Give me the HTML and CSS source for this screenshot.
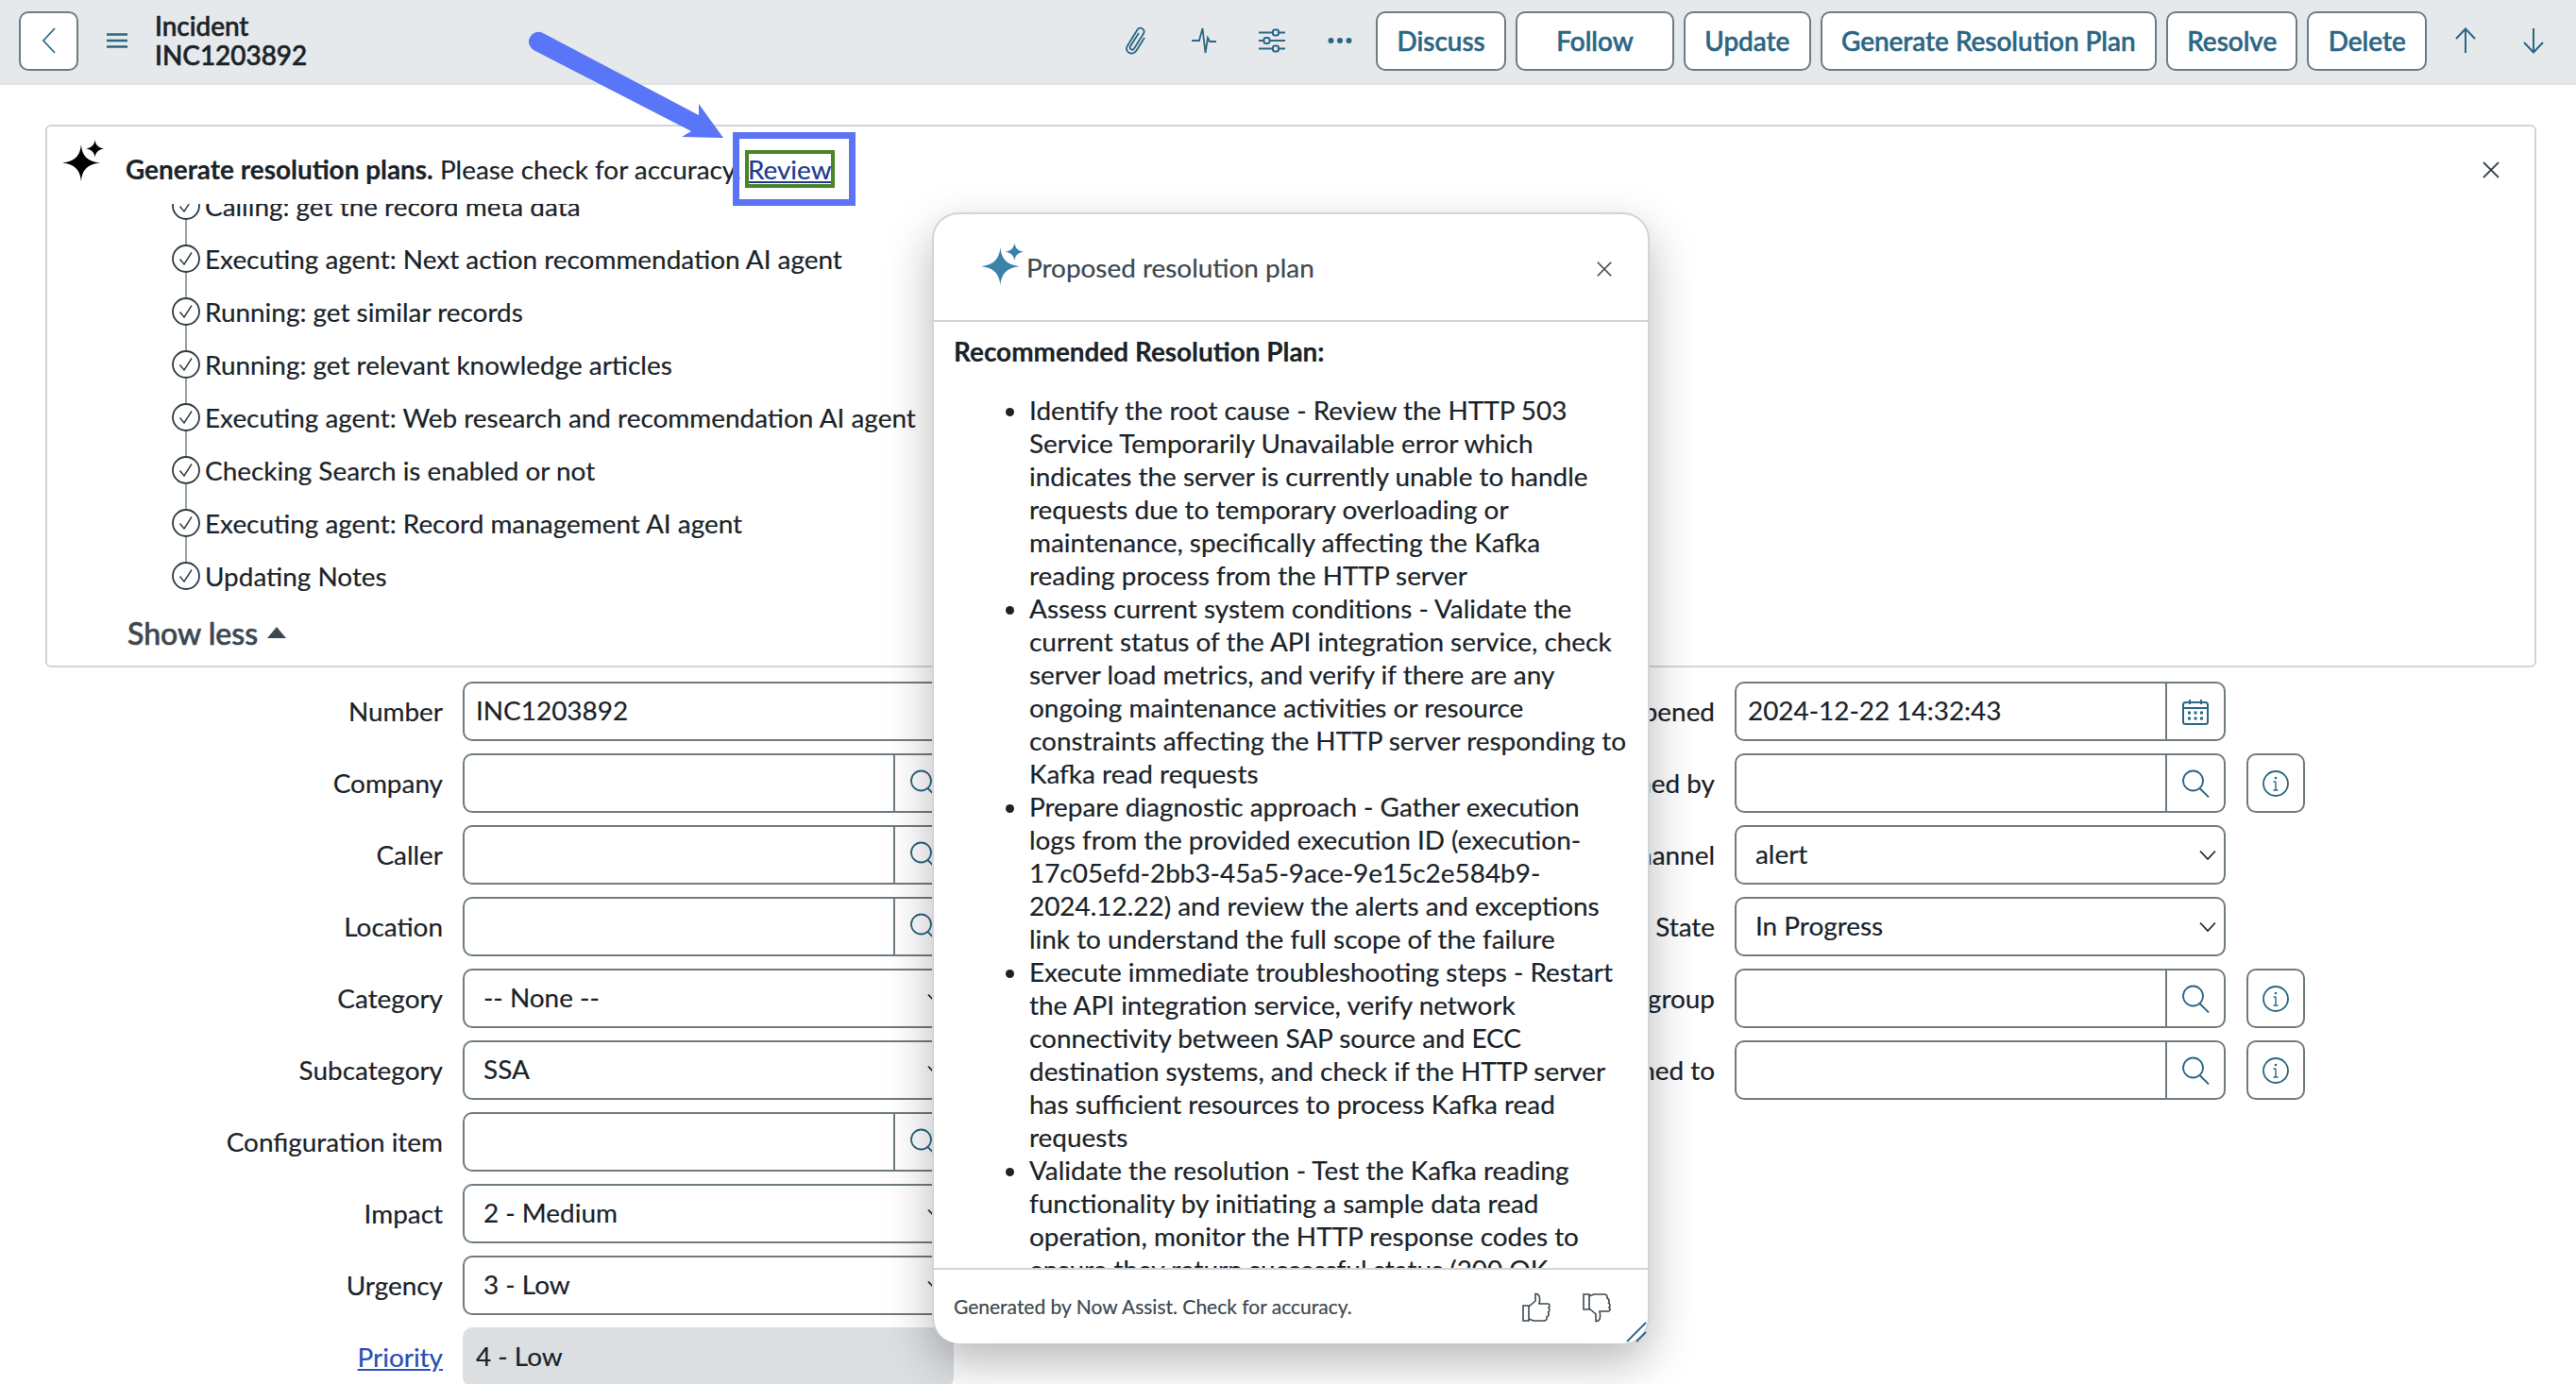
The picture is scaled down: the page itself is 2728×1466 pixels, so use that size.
FILE: index.html
```html
<!DOCTYPE html>
<html lang="en">
<head>
    <meta charset="UTF-8">
    <title>Incident INC1203892</title>
    <link rel="stylesheet" href="styles.css">
</head>
<body>
    <svg class="icon-defs" width="0" height="0">
        <symbol id="i-star" viewBox="0 0 42 42">
            <path d="M19 5 C20 16 25 22 38 23.500 C25 25 20 31 19 42 C18 31 13 25 0 23.500 C13 22 18 16 19 5 Z"/>
            <path d="M33 0 C33.500 5 36 8 42 9 C36 10 33.500 13 33 18 C32.500 13 30 10 24 9 C30 8 32.500 5 33 0 Z"/>
        </symbol>
        <symbol id="i-check" viewBox="0 0 30 30">
            <circle cx="15" cy="15" r="14" fill="none" stroke="#2f3a41" stroke-width="1.800"/>
            <path d="M8.500 15.500 L13 21 L21 8.500" fill="none" stroke="#2f3a41" stroke-width="1.400"/>
        </symbol>
        <symbol id="i-search" viewBox="0 0 30 30">
            <circle cx="12.500" cy="12" r="10.500" fill="none" stroke="currentColor" stroke-width="1.800"/>
            <path d="M19.500 20 L29 29.500" fill="none" stroke="currentColor" stroke-width="1.800"/>
        </symbol>
        <symbol id="i-info" viewBox="0 0 28 28">
            <circle cx="14" cy="14" r="13" fill="none" stroke="currentColor" stroke-width="1.800"/>
            <path d="M14 12 V21 M11.500 12 H14 M11.500 21 H16.500" fill="none" stroke="currentColor" stroke-width="1.400"/>
            <circle cx="14" cy="8" r="1.300" fill="currentColor"/>
        </symbol>
        <symbol id="i-chevron" viewBox="0 0 18 12">
            <path d="M1 1.500 L9 10 L17 1.500" fill="none" stroke="#1f2a30" stroke-width="1.800"/>
        </symbol>
        <symbol id="i-close" viewBox="0 0 20 20">
            <path d="M2 2 L18 18 M18 2 L2 18" fill="none" stroke="currentColor" stroke-width="1.800"/>
        </symbol>
    </svg>

    <header class="topbar">
        <button class="back-btn">
            <svg width="16" height="30" viewBox="0 0 16 30"><path d="M14 2 L2 15 L14 28" fill="none" stroke="#2b6684" stroke-width="1.700"/></svg>
        </button>
        <span class="menu-icon">
            <svg width="24" height="16" viewBox="0 0 24 16"><path d="M1 1.500 H23 M1 8 H23 M1 14.500 H23" stroke="#2b6684" stroke-width="2.400"/></svg>
        </span>
        <div class="record-title">Incident<br>INC1203892</div>
        <div class="actions">
            <span class="icon-btn">
                <svg width="28" height="30" viewBox="0 0 28 30"><path d="M17 7 L8 21 C6.500 24 10.500 26 12 23.500 L22 7.500 C24.500 3 18 -0.500 15.500 3.500 L5 20.500 C1 27 10.500 32 14.500 25.500 L23 12" fill="none" stroke="#2b6684" stroke-width="1.800"/></svg>
            </span>
            <span class="icon-btn">
                <svg width="28" height="30" viewBox="0 0 28 30"><path d="M1 15 H9 L12.500 2 L15.500 28 L18 12 L20 16 H27" fill="none" stroke="#2b6684" stroke-width="1.800"/></svg>
            </span>
            <span class="icon-btn">
                <svg width="30" height="26" viewBox="0 0 30 26"><path d="M1 4.500 H16 M23 4.500 H29 M1 13 H6 M13 13 H29 M1 21.500 H16 M23 21.500 H29" stroke="#2b6684" stroke-width="2"/><rect x="16" y="1.500" width="6" height="6" rx="2" fill="none" stroke="#2b6684" stroke-width="2"/><rect x="6.500" y="10" width="6" height="6" rx="2" fill="none" stroke="#2b6684" stroke-width="2"/><rect x="16" y="18.500" width="6" height="6" rx="2" fill="none" stroke="#2b6684" stroke-width="2"/></svg>
            </span>
            <span class="icon-btn">
                <svg width="26" height="6" viewBox="0 0 26 6"><circle cx="3.500" cy="3" r="3" fill="#2b6684"/><circle cx="13" cy="3" r="3" fill="#2b6684"/><circle cx="22.500" cy="3" r="3" fill="#2b6684"/></svg>
            </span>
            <button class="btn btn-first">Discuss</button>
            <button class="btn btn-wide">Follow</button>
            <button class="btn">Update</button>
            <button class="btn">Generate Resolution Plan</button>
            <button class="btn">Resolve</button>
            <button class="btn">Delete</button>
            <span class="icon-btn">
                <svg width="24" height="28" viewBox="0 0 24 28"><path d="M12 27 V2 M2 12 L12 1.500 L22 12" fill="none" stroke="#2b6684" stroke-width="2"/></svg>
            </span>
            <span class="icon-btn">
                <svg width="24" height="28" viewBox="0 0 24 28"><path d="M12 1 V26 M2 16 L12 26.500 L22 16" fill="none" stroke="#2b6684" stroke-width="2"/></svg>
            </span>
        </div>
    </header>

    <section class="banner">
        <div class="banner-head">
            <svg class="banner-star" width="44" height="44"><use href="#i-star"/></svg>
            <p class="banner-text"><b>Generate resolution plans.</b> Please check for accuracy. <a href="#" class="review-link">Review</a></p>
            <svg class="banner-close" width="20" height="20"><use href="#i-close"/></svg>
        </div>
        <ul class="steps">
            <li class="step"><svg width="30" height="30"><use href="#i-check"/></svg>Calling: get the record meta data</li>
            <li class="step"><svg width="30" height="30"><use href="#i-check"/></svg>Executing agent: Next action recommendation AI agent</li>
            <li class="step"><svg width="30" height="30"><use href="#i-check"/></svg>Running: get similar records</li>
            <li class="step"><svg width="30" height="30"><use href="#i-check"/></svg>Running: get relevant knowledge articles</li>
            <li class="step"><svg width="30" height="30"><use href="#i-check"/></svg>Executing agent: Web research and recommendation AI agent</li>
            <li class="step"><svg width="30" height="30"><use href="#i-check"/></svg>Checking Search is enabled or not</li>
            <li class="step"><svg width="30" height="30"><use href="#i-check"/></svg>Executing agent: Record management AI agent</li>
            <li class="step"><svg width="30" height="30"><use href="#i-check"/></svg>Updating Notes</li>
        </ul>
        <div class="show-less">Show less <span class="caret-up"></span></div>
    </section>

    <main class="form">
        <div class="form-col form-left">
            <div class="row"><label>Number</label><div class="field"><span class="value">INC1203892</span></div></div>
            <div class="row"><label>Company</label><div class="field"><span class="value"></span><span class="addon"><svg width="30" height="30"><use href="#i-search"/></svg></span></div></div>
            <div class="row"><label>Caller</label><div class="field"><span class="value"></span><span class="addon"><svg width="30" height="30"><use href="#i-search"/></svg></span></div></div>
            <div class="row"><label>Location</label><div class="field"><span class="value"></span><span class="addon"><svg width="30" height="30"><use href="#i-search"/></svg></span></div></div>
            <div class="row"><label>Category</label><div class="field select"><span class="value">-- None --</span><svg width="18" height="12"><use href="#i-chevron"/></svg></div></div>
            <div class="row"><label>Subcategory</label><div class="field select"><span class="value">SSA</span><svg width="18" height="12"><use href="#i-chevron"/></svg></div></div>
            <div class="row"><label>Configuration item</label><div class="field"><span class="value"></span><span class="addon"><svg width="30" height="30"><use href="#i-search"/></svg></span></div></div>
            <div class="row"><label>Impact</label><div class="field select"><span class="value">2 - Medium</span><svg width="18" height="12"><use href="#i-chevron"/></svg></div></div>
            <div class="row"><label>Urgency</label><div class="field select"><span class="value">3 - Low</span><svg width="18" height="12"><use href="#i-chevron"/></svg></div></div>
            <div class="row"><label><a href="#" class="priority-link">Priority</a></label><div class="field readonly"><span class="value">4 - Low</span></div></div>
        </div>
        <div class="form-col form-right">
            <div class="row"><label>Opened</label><div class="field"><span class="value">2024-12-22 14:32:43</span><span class="addon">
                <svg width="28" height="28" viewBox="0 0 28 28"><rect x="1" y="4" width="26" height="23" rx="2.500" fill="none" stroke="#2b6684" stroke-width="2"/><path d="M1 10 H27 M8 1 V6 M20 1 V6" stroke="#2b6684" stroke-width="2"/><path d="M6 15 H9 M12.500 15 H15.500 M19 15 H22 M6 21 H9 M12.500 21 H15.500 M19 21 H22" stroke="#2b6684" stroke-width="3"/></svg>
            </span></div></div>
            <div class="row"><label>Opened by</label><div class="field"><span class="value"></span><span class="addon"><svg width="30" height="30"><use href="#i-search"/></svg></span></div><span class="info-btn"><svg width="28" height="28"><use href="#i-info"/></svg></span></div>
            <div class="row"><label>Channel</label><div class="field select"><span class="value">alert</span><svg width="18" height="12"><use href="#i-chevron"/></svg></div></div>
            <div class="row"><label>State</label><div class="field select"><span class="value">In Progress</span><svg width="18" height="12"><use href="#i-chevron"/></svg></div></div>
            <div class="row"><label>Assignment group</label><div class="field"><span class="value"></span><span class="addon"><svg width="30" height="30"><use href="#i-search"/></svg></span></div><span class="info-btn"><svg width="28" height="28"><use href="#i-info"/></svg></span></div>
            <div class="row"><label>Assigned to</label><div class="field"><span class="value"></span><span class="addon"><svg width="30" height="30"><use href="#i-search"/></svg></span></div><span class="info-btn"><svg width="28" height="28"><use href="#i-info"/></svg></span></div>
        </div>
    </main>

    <aside class="plan-modal">
        <div class="plan-head">
            <svg class="plan-star" width="45" height="45"><use href="#i-star"/></svg>
            <span class="plan-title">Proposed resolution plan</span>
            <svg class="plan-close" width="18" height="18"><use href="#i-close"/></svg>
        </div>
        <div class="plan-body">
            <p class="plan-heading">Recommended Resolution Plan:</p>
            <ul class="plan-list">
                <li>Identify the root cause - Review the HTTP 503 Service Temporarily Unavailable error which indicates the server is currently unable to handle requests due to temporary overloading or maintenance, specifically affecting the Kafka reading process from the HTTP server</li>
                <li>Assess current system conditions - Validate the current status of the API integration service, check server load metrics, and verify if there are any ongoing maintenance activities or resource constraints affecting the HTTP server responding to Kafka read requests</li>
                <li>Prepare diagnostic approach - Gather execution logs from the provided execution ID (execution-17c05efd-2bb3-45a5-9ace-9e15c2e584b9-2024.12.22) and review the alerts and exceptions link to understand the full scope of the failure</li>
                <li>Execute immediate troubleshooting steps - Restart the API integration service, verify network connectivity between SAP source and ECC destination systems, and check if the HTTP server has sufficient resources to process Kafka read requests</li>
                <li>Validate the resolution - Test the Kafka reading functionality by initiating a sample data read operation, monitor the HTTP response codes to ensure they return successful status (200 OK instead of 503)</li>
            </ul>
        </div>
        <div class="plan-foot">
            <span class="plan-note">Generated by Now Assist. Check for accuracy.</span>
            <svg class="thumb" width="30" height="32" viewBox="0 0 30 32"><path d="M1 14 H7 V30 H1 Z M7 15 L14 9 V1.500 C18 1 19.500 5 18 12 H27 C29.500 12 29.500 15 28 16 C29.500 18 29 20 27.500 21 C28.500 23 28 25 26 26 C26.500 28.500 25 30 23 30 H12 L7 28" fill="none" stroke="#3c4850" stroke-width="1.600"/></svg>
            <svg class="thumb" width="30" height="32" viewBox="0 0 30 32"><path d="M1 2 H7 V18 H1 Z M7 17 L14 23 V30.500 C18 31 19.500 27 18 20 H27 C29.500 20 29.500 17 28 16 C29.500 14 29 12 27.500 11 C28.500 9 28 7 26 6 C26.500 3.500 25 2 23 2 H12 L7 4" fill="none" stroke="#3c4850" stroke-width="1.600"/></svg>
            <svg class="resize-grip" width="24" height="24" viewBox="0 0 24 24"><path d="M2 22 L22 2 M12 22 L22 12" stroke="#2b6684" stroke-width="1.800"/></svg>
        </div>
    </aside>

    <!-- annotation drawn over the screenshot -->
    <svg class="note-arrow" width="240" height="130" viewBox="0 0 240 130">
        <path d="M18 7 L183 94 L183 82 L209 118 L165 117 L175 111 L8 25 A10.300 10.300 0 0 1 18 7 Z" fill="#5a76f8"/>
    </svg>
    <div class="note-box"></div>
</body>
</html>
```

FILE: styles.css
```css
* {
    box-sizing: border-box;
}
body {
    margin: 0;
    height: 1466px;
    overflow: hidden;
    position: relative;
    background-color: #fff;
    color: #1a2329;
    font-family: 'Lato', sans-serif;
    font-size: 27.92px;
    -webkit-text-stroke: 0.2px;
}
.icon-defs {
    position: absolute;
}
a {
    color: inherit;
}

/* top bar */
.topbar {
    display: flex;
    align-items: center;
    height: 90px;
    padding: 0 14px 2px 20px;
    background-color: #e6e9eb;
    border-bottom: 2px solid #e1e4e6;
}
.back-btn {
    width: 63px;
    height: 63px;
    border: 2px solid #6f7b82;
    border-radius: 10px;
    background-color: #fff;
    padding: 0;
    display: flex;
    align-items: center;
    justify-content: center;
}
.menu-icon {
    display: flex;
    margin-left: 29px;
}
.record-title {
    margin-left: 28px;
    font-weight: 500;
    line-height: 31px;
    -webkit-text-stroke: 0.6px #1a2329;
}
.actions {
    display: flex;
    align-items: center;
    gap: 10px;
    margin-left: auto;
}
.icon-btn {
    width: 62px;
    height: 63px;
    display: flex;
    align-items: center;
    justify-content: center;
}
.btn {
    height: 63px;
    padding: 0 20.3px;
    border: 2px solid #6f7b82;
    border-radius: 10px;
    background-color: #fff;
    color: #2b6684;
    font-family: inherit;
    font-size: 27.92px;
    font-weight: 500;
    -webkit-text-stroke: 0.6px #2b6684;
}
.btn-first {
    margin-left: -3px;
}
.btn-wide {
    width: 168px;
}

/* now assist banner */
.banner {
    margin: 42px 42px 0 48px;
    height: 575px;
    border: 2px solid #d0d5d8;
    border-radius: 6px;
    background-color: #fff;
}
.banner-head {
    display: flex;
    align-items: flex-start;
    height: 82px;
    padding: 14px 36px 0 16px;
}
.banner-text {
    margin: 14px 0 0 23px;
    line-height: 35px;
}
.review-link {
    color: #1f3a8c;
    outline: 4px solid #4a8529;
    outline-offset: -1px;
}
.banner-close {
    margin: 22px 0 0 auto;
    color: #3c4850;
}
.steps {
    list-style: none;
    margin: 0;
    padding: 0 0 0 132px;
    height: 421px;
    overflow: hidden;
}
.step {
    position: relative;
    display: flex;
    align-items: center;
    gap: 5px;
    height: 56px;
}
.step:first-child {
    margin-top: -26px;
}
.step:not(:last-child)::after {
    content: "";
    position: absolute;
    left: 14px;
    top: 43px;
    width: 2px;
    height: 26px;
    background-color: #9aa3a8;
    z-index: 1;
}
.show-less {
    display: flex;
    align-items: center;
    gap: 10px;
    height: 46px;
    margin: 10px 0 0 85px;
    color: #3c4850;
    font-size: 32px;
    font-weight: 500;
    -webkit-text-stroke: 0.6px #3c4850;
}
.caret-up {
    width: 0;
    height: 0;
    border-left: 10px solid transparent;
    border-right: 10px solid transparent;
    border-bottom: 12px solid #3c4850;
}

/* form */
.form {
    display: grid;
    grid-template-columns: 1320px 1fr;
    margin-top: 15px;
    padding-left: 48px;
}
.form-col {
    display: flex;
    flex-direction: column;
    gap: 13px;
}
.row {
    display: flex;
    align-items: center;
    height: 63px;
}
.row label {
    text-align: right;
    white-space: nowrap;
    padding-bottom: 2px;
}
.form-left .row label {
    width: 421px;
    margin-right: 21px;
}
.form-right .row label {
    width: 448px;
    margin-right: 21px;
}
.field {
    display: flex;
    align-items: center;
    width: 520px;
    height: 63px;
    border: 2px solid #6f7b82;
    border-radius: 10px;
    background-color: #fff;
}
.value {
    flex: 1;
    padding: 0 0 3px 12px;
}
.addon {
    width: 62px;
    height: 100%;
    display: flex;
    align-items: center;
    justify-content: center;
    border-left: 2px solid #6f7b82;
    color: #2b6684;
}
.select .value {
    padding-left: 20px;
}
.select svg {
    margin-right: 8px;
}
.readonly {
    border: none;
    background-color: #dcdfe2;
}
.readonly .value {
    padding-left: 14px;
}
.info-btn {
    width: 62px;
    height: 63px;
    margin-left: 22px;
    display: flex;
    align-items: center;
    justify-content: center;
    border: 2px solid #6f7b82;
    border-radius: 10px;
    color: #2b6684;
}
.priority-link {
    color: #2a4fb5;
}

/* proposed plan popup */
.plan-modal {
    position: absolute;
    left: 987px;
    top: 225px;
    width: 760px;
    height: 1198px;
    display: flex;
    flex-direction: column;
    border: 2px solid #d0d5d8;
    border-bottom: none;
    border-radius: 28px;
    background-color: #fff;
    box-shadow: 0 20px 50px rgba(0, 0, 0, 0.28);
}
.plan-head {
    display: flex;
    align-items: center;
    height: 114px;
    padding: 0 37px 0 50px;
    border-bottom: 2px solid #d0d5d8;
    flex: none;
}
.plan-star {
    fill: #3a82aa;
    margin-top: -8px;
}
.plan-title {
    margin-left: 3px;
    color: #3c4850;
}
.plan-close {
    margin: 4px 0 0 auto;
    color: #3c4850;
}
.plan-body {
    flex: 1;
    min-height: 0;
    overflow: hidden;
    padding: 14px 18px 0 21px;
    line-height: 35px;
}
.plan-heading {
    margin: 0 0 27px;
    font-weight: 700;
}
.plan-list {
    margin: 0;
    padding: 0 0 0 80px;
}
.plan-foot {
    position: relative;
    display: flex;
    align-items: center;
    flex: none;
    height: 80px;
    padding: 2px 39px 0 21px;
    gap: 34px;
    border-top: 2px solid #d0d5d8;
}
.plan-note {
    flex: 1;
    color: #3c4850;
    font-size: 21px;
    margin-top: -4px;
}
.resize-grip {
    position: absolute;
    right: 0;
    bottom: 0;
}
.note-arrow {
    position: absolute;
    left: 557px;
    top: 28px;
}
.note-box {
    position: absolute;
    left: 776px;
    top: 140px;
    width: 130px;
    height: 78px;
    border: 7px solid #5b74f5;
}
```
